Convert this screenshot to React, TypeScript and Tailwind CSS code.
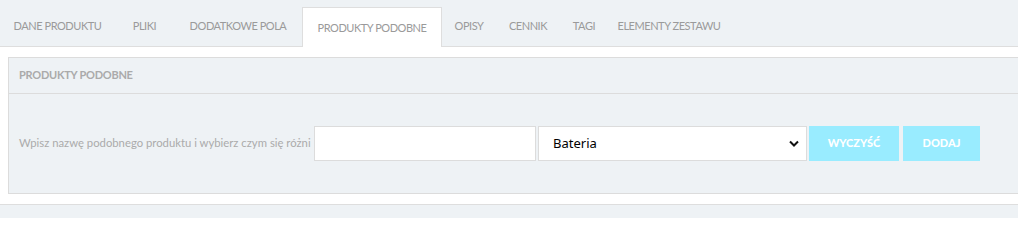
import { useState } from 'react';

const tabs = [
  { label: 'DANE PRODUKTU', w: 'w-[115px]' },
  { label: 'PLIKI', w: 'w-[59px]' },
  { label: 'DODATKOWE POLA', w: 'w-[128px]' },
  { label: 'PRODUKTY PODOBNE', w: 'w-[140px]', active: true },
  { label: 'OPISY', w: 'w-[54px]' },
  { label: 'CENNIK', w: 'w-[64px]' },
  { label: 'TAGI', w: 'w-[48px]' },
  { label: 'ELEMENTY ZESTAWU', w: 'w-[122px]' },
];

export default function App() {
  const [name, setName] = useState('');
  const [kind, setKind] = useState('Bateria');

  return (
    <div className="w-[1018px] h-[218px] overflow-hidden bg-white font-['Lato',sans-serif]">
      {/* Tabs */}
      <div className="h-[47px] bg-[#eef2f5] border-b border-[#dedede] flex items-end">
        {tabs.map(tab =>
          tab.active ? (
            <div
              key={tab.label}
              className={`${tab.w} h-[40px] -mb-px pt-[1px] bg-white border border-b-0 border-[#dedede] flex items-center justify-center text-[11px] tracking-[-0.45px] text-[#9a9a9a]`}
            >
              {tab.label}
            </div>
          ) : (
            <div
              key={tab.label}
              className={`${tab.w} h-[40px] pt-[1px] flex items-center justify-center text-[11px] tracking-[-0.45px] text-[#9a9a9a]`}
            >
              {tab.label}
            </div>
          )
        )}
      </div>

      {/* Panel */}
      <div className="pl-[8px] pt-[10px]">
        <div className="w-[1020px] border border-[#dcdcdc] bg-[#eef2f5]">
          <div className="h-[36px] border-b border-[#dcdcdc] px-[10px] flex items-center text-[11px] font-bold tracking-[-0.25px] text-[#aaaaaa]">
            PRODUKTY PODOBNE
          </div>
          <div className="h-[99px] px-[10px] flex items-center gap-[2px]">
            <span className="w-[293px] shrink-0 whitespace-nowrap text-[11.3px] text-[#ababab]">
              Wpisz nazwę podobnego produktu i wybierz czym się różni
            </span>
            <input
              value={name}
              onChange={e => setName(e.target.value)}
              className="w-[222px] h-[35px] bg-white border border-[#dcdcdc] outline-none px-2 text-[13px]"
            />
            <div className="relative">
              <select
                value={kind}
                onChange={e => setKind(e.target.value)}
                className="appearance-none w-[269px] h-[35px] bg-white border border-[#dcdcdc] outline-none pl-[14px] text-[13px] text-black font-['Noto_Sans',sans-serif]"
              >
                <option>Bateria</option>
                <option>Kolor</option>
                <option>Rozmiar</option>
              </select>
              <svg
                className="absolute right-[8px] top-[14px] pointer-events-none"
                width="10"
                height="7"
                viewBox="0 0 10 7"
              >
                <path d="M1 1.5 L5 5.5 L9 1.5" stroke="#111" strokeWidth="2" fill="none" />
              </svg>
            </div>
            <button className="w-[90px] h-[35px] bg-[#99ecff] text-white text-[11px] font-black">
              WYCZYŚĆ
            </button>
            <button className="ml-[2px] w-[77px] h-[35px] bg-[#99ecff] text-white text-[11px] font-black">
              DODAJ
            </button>
          </div>
        </div>
      </div>

      <div className="mt-[10px] border-t border-[#dedede] h-[40px] bg-[#eef2f5]" />
    </div>
  );
}
